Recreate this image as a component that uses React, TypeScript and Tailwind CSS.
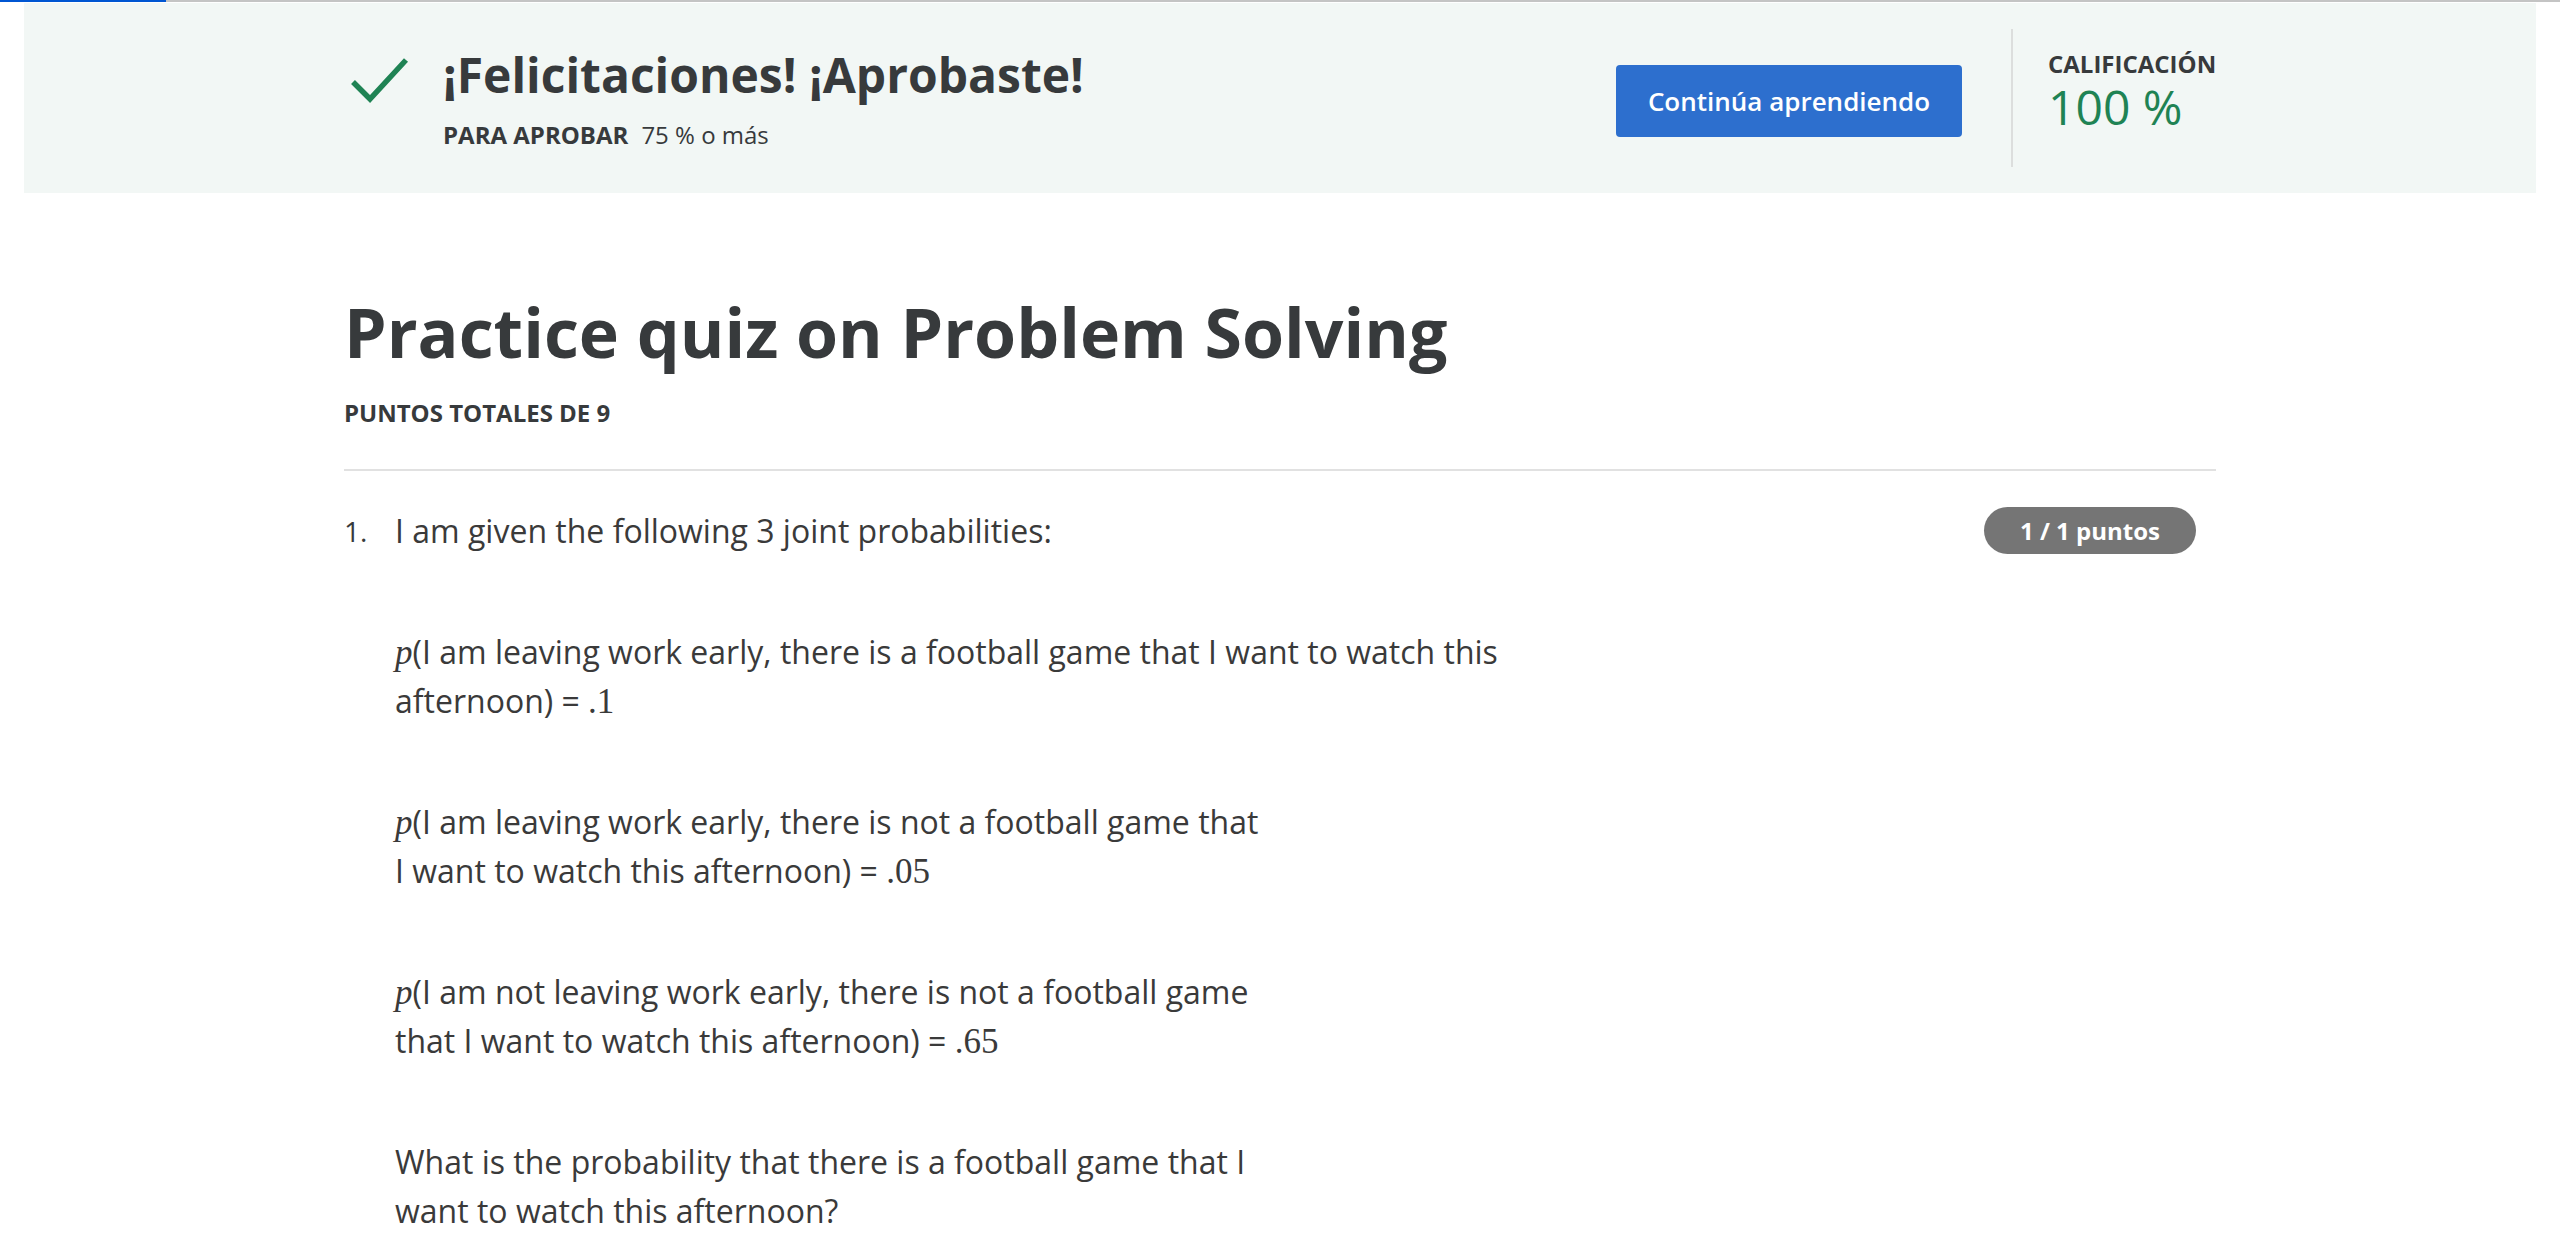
function MathP() {
  return <span className="font-['Liberation_Serif',serif] text-[35px] leading-none italic">p</span>;
}

function MathNum({ value }: { value: string }) {
  return <span className="font-['Liberation_Serif',serif] text-[35px] leading-none">{value}</span>;
}

export default function App() {
  return (
    <div className="min-h-screen bg-white font-['Open_Sans',sans-serif] text-[#373a3c]">
      {/* progress line */}
      <div className="flex h-[2px]">
        <div className="w-[166px] bg-[#0056d2]" />
        <div className="flex-1 bg-[#c4c4c4]" />
      </div>

      {/* result banner */}
      <div className="mx-[24px] mt-[1px] h-[190px] bg-[#f2f7f5]">
        <div className="mx-auto flex h-full max-w-[1872px] justify-between">
          <div className="mt-[44px] flex self-start pl-[6px]">
            <svg width="60" height="46" viewBox="0 0 60 46" className="mt-[10px] shrink-0">
              <path d="M3 25 L20 42 L56 3" fill="none" stroke="#1f8354" strokeWidth="5.5" />
            </svg>
            <div className="ml-[33px]">
              <h2 className="text-[48px] font-bold leading-[55px]">¡Felicitaciones! ¡Aprobaste!</h2>
              <div className="mt-[18px] flex text-[24px] leading-[30px]">
                <span className="font-bold">PARA APROBAR</span>
                <span className="ml-[13px]">75 % o más</span>
              </div>
            </div>
          </div>

          <div className="flex">
            <button className="mt-[62px] h-[72px] w-[346px] self-start rounded-[4px] bg-[#2d6fce] text-[26px] font-semibold text-white">
              Continúa aprendiendo
            </button>
            <div className="my-[26px] ml-[49px] w-[2px] bg-[#dcdedd]" />
            <div className="ml-[35px] mt-[46px] w-[168px] self-start">
              <div className="text-[24px] font-bold leading-[30px]">CALIFICACIÓN</div>
              <div className="text-[48px] leading-[55px] text-[#1f8354]">100 %</div>
            </div>
          </div>
        </div>
      </div>

      {/* quiz */}
      <main className="mx-auto max-w-[1872px] pb-[80px]">
        <h1 className="mt-[96px] text-[68px] font-bold leading-[85px]">Practice quiz on Problem Solving</h1>
        <div className="mt-[24px] text-[24px] font-bold leading-[30px]">PUNTOS TOTALES DE 9</div>
        <div className="mt-[41px] h-[2px] bg-[#e1e1e1]" />

        <div className="mt-[35px] flex">
          <div className="mt-[1px] w-[51px] shrink-0 text-[28px] leading-[49px]">1.</div>
          <div className="flex flex-1 flex-col gap-[72px] text-[32px] leading-[49px] text-[#3a3a3a]">
            <p>I am given the following 3 joint probabilities:</p>
            <p>
              <MathP />(I am leaving work early, there is a football game that I want to watch this
              <br />
              afternoon) = <MathNum value=".1" />
            </p>
            <p>
              <MathP />(I am leaving work early, there is not a football game that
              <br />I want to watch this afternoon) = <MathNum value=".05" />
            </p>
            <p>
              <MathP />(I am not leaving work early, there is not a football game
              <br />
              that I want to watch this afternoon) = <MathNum value=".65" />
            </p>
            <p>
              What is the probability that there is a football game that I
              <br />
              want to watch this afternoon?
            </p>
          </div>
          <div className="mr-[20px] mt-[1px] flex h-[47px] w-[212px] shrink-0 items-center justify-center rounded-full bg-[#757575] text-[24px] font-bold text-white">
            1 / 1 puntos
          </div>
        </div>
      </main>
    </div>
  );
}
